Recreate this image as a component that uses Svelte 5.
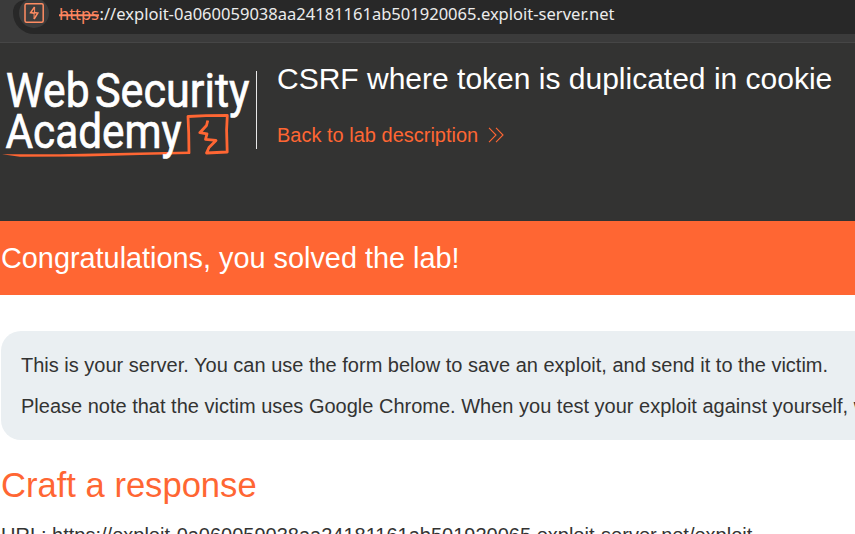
<script>
  const host = 'exploit-0a060059038aa24181161ab501920065.exploit-server.net';
</script>

<div class="page">
  <div class="toolbar">
    <div class="address">
      <span class="site-icon">
        <svg width="22" height="22" viewBox="0 0 22 22" fill="none">
          <rect x="2" y="1.7" width="18.2" height="18.6" rx="1.5" stroke="#ff8c62" stroke-width="1.5" />
          <path d="M11.6 5 L7.6 10.6 L11.3 11.2 M10.9 10.4 L14.8 11 L11.1 17" stroke="#ff8c62" stroke-width="1.5" />
          <path d="M11.6 5 V10.6 M11.1 11 V17" stroke="#ff8c62" stroke-width="1" />
        </svg>
      </span>
      <svg class="url" width="570" height="30">
        <text x="0" y="19" textLength="40" lengthAdjust="spacingAndGlyphs" fill="#ff8660">https</text>
        <path d="M0 14.2H40" stroke="#ff8660" stroke-width="2" />
        <text x="40.5" y="19" textLength="515" lengthAdjust="spacingAndGlyphs" fill="#ececec">://{host}</text>
      </svg>
    </div>
  </div>

  <header>
    <svg class="logo" width="256" height="95" viewBox="0 65 256 95">
      <g class="word">
        <text x="6" y="107" textLength="83.5" lengthAdjust="spacingAndGlyphs">Web</text>
        <text x="95" y="107" textLength="154.5" lengthAdjust="spacingAndGlyphs">Security</text>
      </g>
      <path d="M2 154.3 L60 154.3 L140 152.6 L190 151.6 V154 L140 155.1 L85 156.5 L20 156.8 Z" fill="#ff6633" />
      <g fill="none" stroke="#ff6633" stroke-width="2.8" stroke-linejoin="round">
        <path d="M189 153.5 L188.7 133 L188 116.5 L206 115.6 L227.3 115.5 L226.6 130 L227.2 152 L206.5 153 L209 147.5 L216 140.4 L205.5 139.3 L207 133.8 L199.8 132.7 L206.5 125.5 L207.8 120.5" />
      </g>
      <text class="word" x="5.5" y="148" textLength="176" lengthAdjust="spacingAndGlyphs">Academy</text>
    </svg>
    <div class="divider"></div>
    <div class="heading">
      <h2>CSRF where token is duplicated in cookie</h2>
      <span class="back">Back to lab description
        <svg width="16" height="16" viewBox="0 0 16 16" fill="none" stroke="#ff6633" stroke-width="1.1">
          <path d="M1 .8 L8 8 L1 15.2 M8 .8 L15 8 L8 15.2" />
        </svg>
      </span>
    </div>
  </header>

  <section class="solved">Congratulations, you solved the lab!</section>

  <main>
    <div class="notice">
      <p>This is your server. You can use the form below to save an exploit, and send it to the victim.</p>
      <p>Please note that the victim uses Google Chrome. When you test your exploit against yourself, we</p>
    </div>
    <h3>Craft a response</h3>
    <p class="link">URL: https://{host}/exploit</p>
  </main>
</div>

<style>
  .page {
    width: 855px;
    height: 534px;
    overflow: hidden;
    background: #fff;
    color: #333332;
    font-family: 'Liberation Sans', Arial, sans-serif;
    font-size: 20px;
  }
  .page, .page * { box-sizing: border-box; }
  h2, h3, p { margin: 0; font-weight: 400; white-space: nowrap; }
  svg { display: block; flex: none; }
  .toolbar {
    height: 43px;
    padding-left: 13px;
    background: #3b3b3b;
    border-bottom: 1px solid #464646;
  }
  .address {
    display: flex;
    height: 34px;
    margin-right: -30px;
    padding-left: 6px;
    background: #282828;
    border-radius: 12px 0 0 21px;
  }
  .site-icon {
    display: flex;
    width: 30px;
    height: 30px;
    margin-top: -2px;
    align-items: center;
    justify-content: center;
    border-radius: 50%;
    background: #3c3c3c;
  }
  .url {
    margin: 1px 0 0 10px;
    font-family: 'Noto Sans', 'Open Sans', sans-serif;
    font-size: 17px;
  }
  header {
    display: flex;
    height: 178px;
    background: #333332;
  }
  .logo { margin-top: 22px; overflow: visible; }
  .word {
    fill: #fff;
    stroke: #fff;
    stroke-width: 0.7px;
    font-family: Roboto, sans-serif;
    font-size: 48px;
    font-weight: 400;
  }
  .divider {
    width: 1px;
    height: 78px;
    margin-top: 28px;
    background: #e8e8e8;
  }
  .heading { padding: 18px 0 0 20px; }
  h2 { font-size: 30px; line-height: 36px; color: #fff; }
  .back {
    display: flex;
    align-items: center;
    gap: 10px;
    margin-top: 26px;
    line-height: 24px;
    color: #ff6633;
  }
  .solved {
    height: 74px;
    padding-left: 1px;
    background: #ff6633;
    color: #fff;
    font-size: 28.85px;
    line-height: 74px;
  }
  main { padding: 36px 0 0 1px; }
  .notice {
    height: 109px;
    padding: 14px 0 0 20px;
    border-radius: 20px 0 0 20px;
    background: #eaeff2;
    overflow: hidden;
  }
  .notice p { line-height: 41px; }
  h3 {
    margin-top: 24px;
    color: #ff6633;
    font-size: 34.6px;
    line-height: 42px;
  }
  .link { margin-top: 17px; line-height: 24px; }
</style>
